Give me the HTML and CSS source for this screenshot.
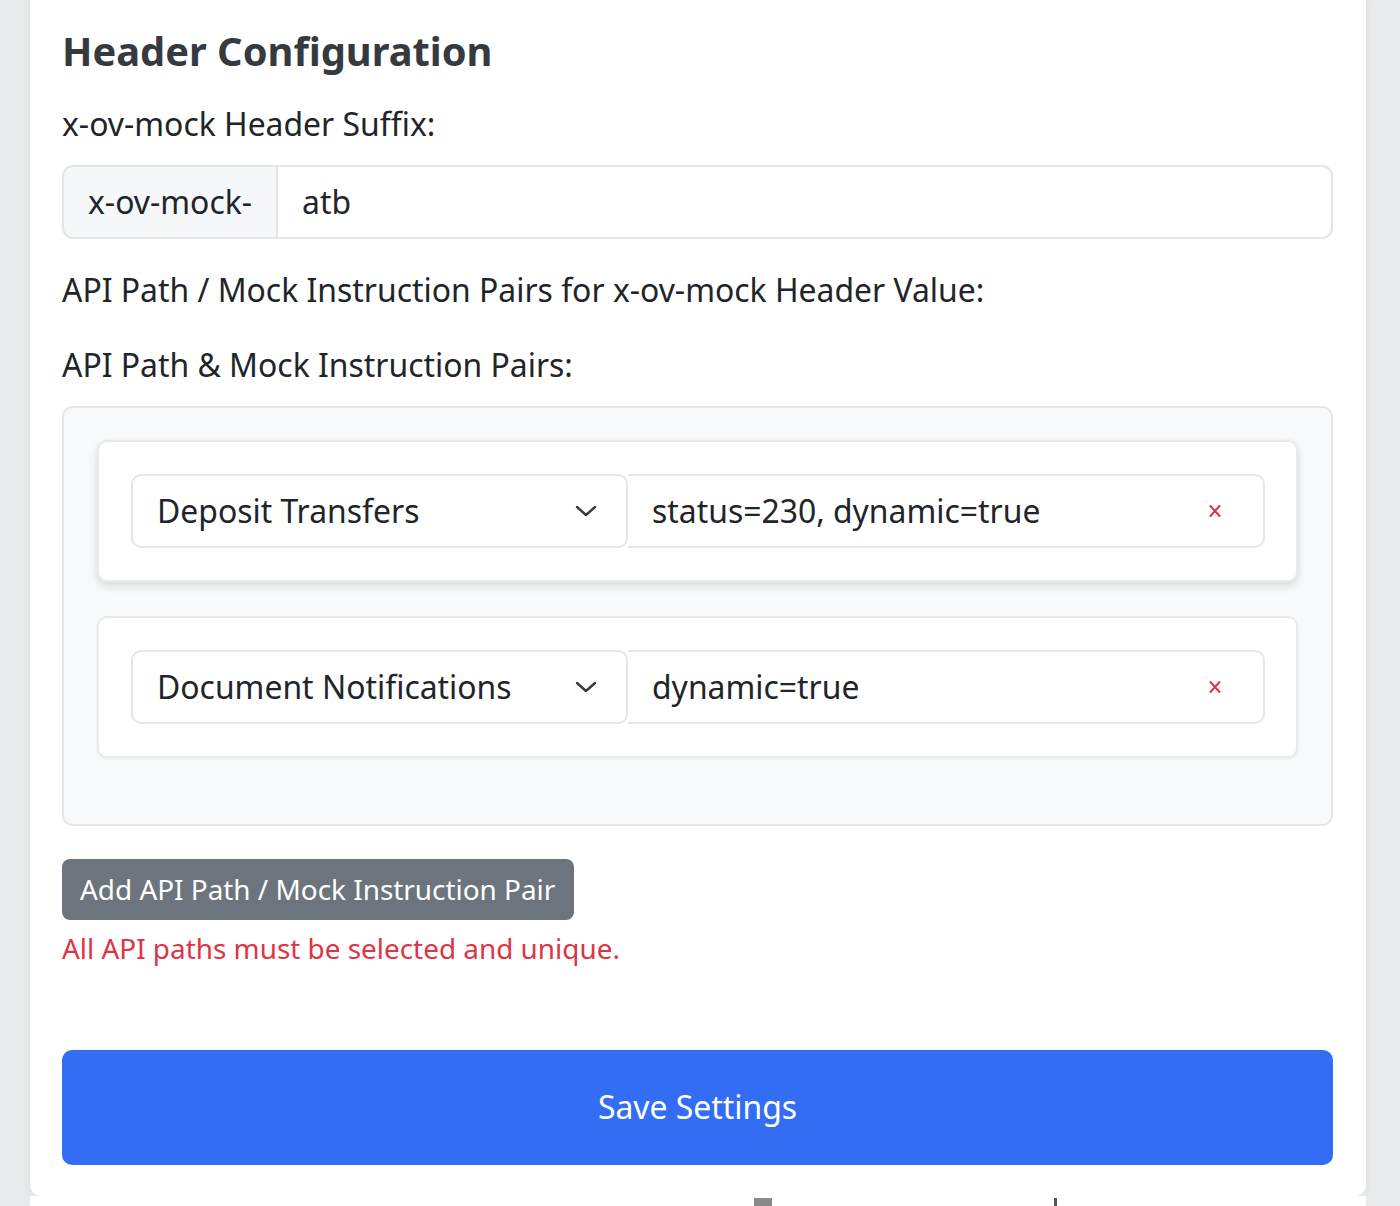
FILE: index.html
```html
<!DOCTYPE html>
<html lang="en">
<head>
<meta charset="utf-8">
<title>Header Configuration</title>
<link rel="stylesheet" href="styles.css">
</head>
<body>
<div class="page">
  <main class="card">
    <h5 class="title">Header Configuration</h5>

    <label class="label label-suffix">x-ov-mock Header Suffix:</label>
    <div class="input-group">
      <span class="prefix">x-ov-mock-</span>
      <input class="field" type="text" value="atb">
    </div>

    <p class="label label-pairs">API Path / Mock Instruction Pairs for x-ov-mock Header Value:</p>
    <p class="label label-list">API Path &amp; Mock Instruction Pairs:</p>

    <div class="pairs">
      <div class="pair pair-drag">
        <div class="row">
          <div class="select">
            <span>Deposit Transfers</span>
            <svg class="chev" width="22" height="12" viewBox="0 0 22 12"><path d="M2 2l9 8 9-8" fill="none" stroke="#343a40" stroke-width="2.4" stroke-linecap="round" stroke-linejoin="round"/></svg>
          </div>
          <input class="value" type="text" value="status=230, dynamic=true">
          <button class="remove" type="button" aria-label="Remove">
            <svg width="14" height="14" viewBox="0 0 14 14"><path d="M2.5 2l9 10M11.5 2l-9 10" stroke="#dc3545" stroke-width="2" stroke-linecap="round"/></svg>
          </button>
        </div>
      </div>
      <div class="pair">
        <div class="row">
          <div class="select">
            <span>Document Notifications</span>
            <svg class="chev" width="22" height="12" viewBox="0 0 22 12"><path d="M2 2l9 8 9-8" fill="none" stroke="#343a40" stroke-width="2.4" stroke-linecap="round" stroke-linejoin="round"/></svg>
          </div>
          <input class="value" type="text" value="dynamic=true">
          <button class="remove" type="button" aria-label="Remove">
            <svg width="14" height="14" viewBox="0 0 14 14"><path d="M2.5 2l9 10M11.5 2l-9 10" stroke="#dc3545" stroke-width="2" stroke-linecap="round"/></svg>
          </button>
        </div>
      </div>
    </div>

    <button class="btn-add" type="button">Add API Path / Mock Instruction Pair</button>
    <div class="error">All API paths must be selected and unique.</div>

    <button class="btn-save" type="button">Save Settings</button>
  </main>
  <div class="below">
    <span class="blk blk-a"></span>
    <span class="blk blk-b"></span>
  </div>
</div>
</body>
</html>
```

FILE: styles.css
```css
html, body {
  margin: 0;
  padding: 0;
  height: 1206px;
  overflow: hidden;
}

body {
  background: #e9eaec;
  font-family: "Noto Sans", "Open Sans", sans-serif;
  font-size: 31.9px;
  line-height: 1.5;
  color: #212529;
}

.page {
  width: 1400px;
}

.card {
  margin-left: 30px;
  width: 1336px;
  box-sizing: border-box;
  background: #ffffff;
  padding: 28px 33px 31px 32px;
  border-radius: 0 0 11px 11px;
  box-shadow: 0 0 8px rgba(0, 0, 0, 0.07);
  display: flex;
  flex-direction: column;
  align-items: stretch;
}

.title {
  margin: 0 0 26px;
  font-size: 39.8px;
  line-height: 46.8px;
  font-weight: 700;
  color: #343a40;
}

.label {
  display: block;
  margin: 0;
  line-height: 46.8px;
}

.label-suffix {
  margin-bottom: 17px;
}

.input-group {
  display: flex;
  height: 74px;
  box-sizing: border-box;
  margin-bottom: 28px;
}

.prefix {
  display: flex;
  align-items: center;
  padding: 0 24px;
  background: #f6f7f9;
  border: 2px solid #e2e5e9;
  border-radius: 11px 0 0 11px;
  color: #212529;
}

.field,
.value {
  flex: 1;
  min-width: 0;
  font: inherit;
  color: #212529;
  background: #ffffff;
  border: 2px solid #e2e5e9;
  border-left: none;
  padding: 0 24px;
  outline: none;
  margin: 0;
}

.field {
  border-radius: 0 11px 11px 0;
}

.label-pairs {
  margin-bottom: 29px;
}

.label-list {
  margin-bottom: 17px;
}

.pairs {
  background: #f8f9fa;
  border: 2px solid #e4e6e9;
  border-radius: 11px;
  padding: 32px 33px 34px 33px;
}

.pair {
  background: #ffffff;
  border: 2px solid #e8eaed;
  border-radius: 10px;
  padding: 32px 31px 32px 32px;
  margin-bottom: 34px;
  box-shadow: 0 1px 3px rgba(0, 0, 0, 0.06);
}

.pair:last-child {
  margin-bottom: 32px;
}

.pair-drag {
  box-shadow: 0 5px 8px rgba(0, 0, 0, 0.10), 0 0 4px rgba(0, 0, 0, 0.05);
}

.row {
  display: flex;
  height: 74px;
  min-height: 74px;
  box-sizing: border-box;
}

.select {
  width: 497px;
  box-sizing: border-box;
  display: flex;
  align-items: center;
  justify-content: space-between;
  padding: 0 29px 0 24px;
  border: 2px solid #e4e6e9;
  border-radius: 10px;
  background: #ffffff;
}

.chev {
  display: block;
}

.value {
  border-radius: 0;
  border-right: none;
}

.remove {
  width: 98px;
  border: 2px solid #e4e6e9;
  border-left: none;
  border-radius: 0 10px 10px 0;
  background: #ffffff;
  display: flex;
  align-items: center;
  justify-content: center;
  padding: 0;
  margin: 0;
}

.remove svg {
  display: block;
}

.btn-add {
  align-self: flex-start;
  margin-top: 33px;
  height: 61px;
  padding: 0 19px 0 18px;
  font-family: inherit;
  font-size: 27.9px;
  line-height: 41px;
  color: #ffffff;
  background: #6c757d;
  border: none;
  border-radius: 8px;
}

.error {
  margin-top: 8px;
  font-size: 27.9px;
  line-height: 41px;
  color: #dc3545;
}

.btn-save {
  margin-top: 81px;
  height: 115px;
  font-family: inherit;
  font-size: 31.9px;
  line-height: 46.8px;
  color: #ffffff;
  background: #326df3;
  border: none;
  border-radius: 10px;
}

.below {
  margin-left: 30px;
  width: 1336px;
  height: 10px;
  background: #ffffff;
  position: relative;
}

.blk {
  position: absolute;
  bottom: 0;
  height: 8px;
}

.blk-a {
  left: 724px;
  width: 18px;
  background: #8a8a8a;
}

.blk-b {
  left: 1024px;
  width: 3px;
  background: #555555;
}
```
